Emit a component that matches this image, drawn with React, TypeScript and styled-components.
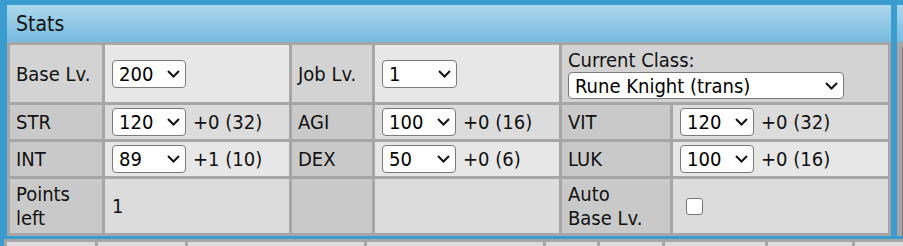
import { Fragment } from 'react';
import styled, { createGlobalStyle } from 'styled-components';

const GlobalStyle = createGlobalStyle`
  html, body {
    margin: 0;
    padding: 0;
    background: #3b9dcf;
    overflow: hidden;
  }
  body {
    font-family: "DejaVu Sans Condensed", "DejaVu Sans", "Liberation Sans", sans-serif;
    font-stretch: condensed;
    font-size: 20px;
    color: #111;
  }
`;

const Page = styled.div`
  width: 903px;
  height: 246px;
  overflow: hidden;
  background: #3b9dcf;
`;

const TopRow = styled.div`
  display: flex;
  gap: 6px;
  padding: 5px 0 0 7px;
`;

const Panel = styled.section<{ $width: number }>`
  flex: none;
  width: ${p => p.$width}px;
  display: flex;
  flex-direction: column;
`;

const PanelHeader = styled.div`
  height: 37px;
  display: flex;
  align-items: center;
  padding-left: 9px;
  font-size: 21px;
  background: linear-gradient(to bottom, #acd7eb, #76bbe0);
`;

const StatsTable = styled.table`
  width: 884px;
  table-layout: fixed;
  border-collapse: separate;
  border-spacing: 3px;
  background: #a6a6a6;
`;

const Cell = styled.td<{ $bg: string }>`
  background: ${p => p.$bg};
  padding: 3px 7px 3px 6px;
  line-height: 24px;
  vertical-align: middle;
  white-space: nowrap;
`;

const ValueCell = styled(Cell)`
  padding-left: 7px;
`;

const ValueRow = styled.div`
  display: flex;
  align-items: center;
  gap: 7px;
`;

const SelectWrap = styled.span`
  position: relative;
  display: inline-flex;
  flex: none;
`;

const NativeSelect = styled.select<{ $w: number; $h: number }>`
  appearance: none;
  -webkit-appearance: none;
  width: ${p => p.$w}px;
  height: ${p => p.$h}px;
  margin: 0;
  padding: 0 0 0 6px;
  border: 1px solid #7a7a7a;
  border-radius: 4px;
  background: #fff;
  color: #000;
  font: inherit;
  line-height: 24px;
`;

const Chevron = styled.svg`
  position: absolute;
  right: 6px;
  top: 50%;
  margin-top: -4px;
  pointer-events: none;
`;

const Check = styled.input`
  appearance: none;
  -webkit-appearance: none;
  width: 17px;
  height: 17px;
  margin: 0 0 0 6px;
  border: 1px solid #767676;
  border-radius: 3px;
  background: #fff;
  display: block;
`;

const ClassLabel = styled.div`
  line-height: 24px;
`;

const SidePanelBody = styled.div`
  flex: 1;
  height: 194px;
  background: #a6a6a6;
  padding: 5px 0 0 5px;
  display: flex;
`;

const SideCell = styled.div`
  flex: 1;
  background: #cfcfcf;
  border-left: 1px solid #7a7a7a;
`;

const BottomStrip = styled.div`
  display: flex;
  gap: 3px;
  margin: 3px 0 0 4px;
  padding: 3px;
  background: #a6a6a6;
`;

const BottomCell = styled.div<{ $w: number }>`
  flex: none;
  width: ${p => p.$w}px;
  height: 30px;
  background: #dcdcdc;
`;

const range = (from: number, to: number) =>
  Array.from({ length: to - from + 1 }, (_, i) => from + i);

const Select = ({ value, options, width, height = 28 }: {
  value: string | number;
  options: (string | number)[];
  width: number;
  height?: number;
}) => (
  <SelectWrap>
    <NativeSelect $w={width} $h={height} defaultValue={String(value)}>
      {options.map(o => (
        <option key={o} value={String(o)}>{o}</option>
      ))}
    </NativeSelect>
    <Chevron width="13" height="8" viewBox="0 0 13 8">
      <path d="M1 1 L6.5 6.5 L12 1" fill="none" stroke="#111" strokeWidth="2" />
    </Chevron>
  </SelectWrap>
);

const LABEL_LIGHT = '#d3d3d3';
const LABEL = '#c9c9c9';
const VALUE_LIGHT = '#e7e7e7';
const VALUE = '#dcdcdc';

const statRows = [
  [
    { label: 'STR', value: 120, bonus: '+0 (32)' },
    { label: 'AGI', value: 100, bonus: '+0 (16)' },
    { label: 'VIT', value: 120, bonus: '+0 (32)' },
  ],
  [
    { label: 'INT', value: 89, bonus: '+1 (10)' },
    { label: 'DEX', value: 50, bonus: '+0 (6)' },
    { label: 'LUK', value: 100, bonus: '+0 (16)' },
  ],
];

const classes = ['Novice', 'Swordman', 'Knight', 'Lord Knight', 'Rune Knight', 'Rune Knight (trans)'];
const bottomCells = [88, 87, 176, 176, 51, 62, 100, 84, 100];

export default function App() {
  return (
    <Page>
      <GlobalStyle />
      <TopRow>
        <Panel $width={884}>
          <PanelHeader>Stats</PanelHeader>
          <StatsTable>
            <colgroup>
              <col style={{ width: 92 }} />
              <col style={{ width: 184 }} />
              <col style={{ width: 80 }} />
              <col style={{ width: 184 }} />
              <col style={{ width: 108 }} />
              <col style={{ width: 215 }} />
            </colgroup>
            <tbody>
              <tr>
                <Cell $bg={LABEL_LIGHT}>Base Lv.</Cell>
                <ValueCell $bg={VALUE_LIGHT}>
                  <Select value={200} options={range(1, 200)} width={74} />
                </ValueCell>
                <Cell $bg={LABEL_LIGHT}>Job Lv.</Cell>
                <ValueCell $bg={VALUE_LIGHT}>
                  <Select value={1} options={range(1, 70)} width={75} />
                </ValueCell>
                <Cell $bg={LABEL_LIGHT} colSpan={2}>
                  <ClassLabel>Current Class:</ClassLabel>
                  <Select value="Rune Knight (trans)" options={classes} width={276} height={27} />
                </Cell>
              </tr>
              {statRows.map((row, ri) => (
                <tr key={ri}>
                  {row.map(stat => (
                    <Fragment key={stat.label}>
                      <Cell $bg={LABEL}>{stat.label}</Cell>
                      <ValueCell $bg={ri === 1 ? VALUE_LIGHT : VALUE}>
                        <ValueRow>
                          <Select value={stat.value} options={range(1, 130)} width={74} />
                          <span>{stat.bonus}</span>
                        </ValueRow>
                      </ValueCell>
                    </Fragment>
                  ))}
                </tr>
              ))}
              <tr>
                <Cell $bg={LABEL}>Points<br />left</Cell>
                <ValueCell $bg={VALUE}>1</ValueCell>
                <Cell $bg={LABEL} />
                <ValueCell $bg={VALUE} />
                <Cell $bg={LABEL}>Auto<br />Base Lv.</Cell>
                <ValueCell $bg={VALUE}>
                  <Check type="checkbox" />
                </ValueCell>
              </tr>
            </tbody>
          </StatsTable>
        </Panel>
        <Panel $width={120}>
          <PanelHeader />
          <SidePanelBody>
            <SideCell />
          </SidePanelBody>
        </Panel>
      </TopRow>
      <BottomStrip>
        {bottomCells.map((w, i) => (
          <BottomCell key={i} $w={w} />
        ))}
      </BottomStrip>
    </Page>
  );
}
